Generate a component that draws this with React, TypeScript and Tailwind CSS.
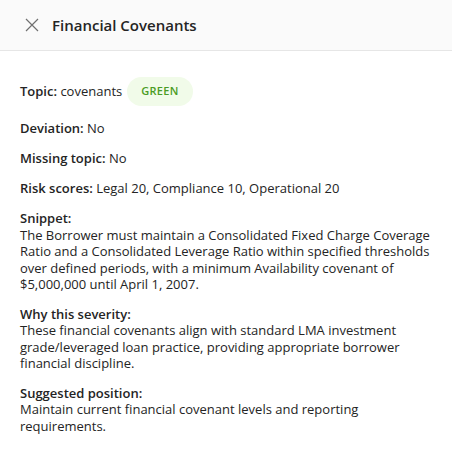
import React from 'react';

interface Field {
  label: string;
  value: string;
}

const inline: Field[] = [
  { label: 'Deviation:', value: 'No' },
  { label: 'Missing topic:', value: 'No' },
  { label: 'Risk scores:', value: 'Legal 20, Compliance 10, Operational 20' },
];

const blocks: Field[] = [
  {
    label: 'Snippet:',
    value:
      'The Borrower must maintain a Consolidated Fixed Charge Coverage Ratio and a Consolidated Leverage Ratio within specified thresholds over defined periods, with a minimum Availability covenant of $5,000,000 until April 1, 2007.',
  },
  {
    label: 'Why this severity:',
    value:
      'These financial covenants align with standard LMA investment grade/leveraged loan practice, providing appropriate borrower financial discipline.',
  },
  {
    label: 'Suggested position:',
    value: 'Maintain current financial covenant levels and reporting requirements.',
  },
];

export default function App() {
  return (
    <div className="w-[452px] h-[456px] bg-white text-[#242424] font-['Open_Sans',sans-serif]">
      <div className="h-[51px] bg-[#fafafa] border-b border-[#e6e6e6] flex items-center pl-[25px]">
        <svg width="14" height="14" viewBox="0 0 14 14" className="text-[#707070]">
          <path d="M1 1 L13 13 M13 1 L1 13" stroke="currentColor" strokeWidth="1.2" fill="none" />
        </svg>
        <h1 className="ml-[13px] text-[15px] font-semibold">Financial Covenants</h1>
      </div>
      <div className="px-5 pt-[26px] text-[13px] leading-[16.5px]">
        <div className="flex items-center gap-[5px]">
          <span>
            <span className="font-semibold">Topic:</span> covenants
          </span>
          <span className="h-[29px] px-[14px] rounded-full bg-[#f1fbe9] text-[#4a9c24] text-[11px] font-semibold flex items-center tracking-[0.3px]">
            GREEN
          </span>
        </div>
        {inline.map((f) => (
          <div key={f.label} className="mt-[13.5px]">
            <span className="font-semibold">{f.label}</span> {f.value}
          </div>
        ))}
        {blocks.map((b, i) => (
          <div key={b.label} className={i === 0 ? 'mt-[14px]' : 'mt-[13px]'}>
            <div className="font-semibold">{b.label}</div>
            <div>{b.value}</div>
          </div>
        ))}
      </div>
    </div>
  );
}
